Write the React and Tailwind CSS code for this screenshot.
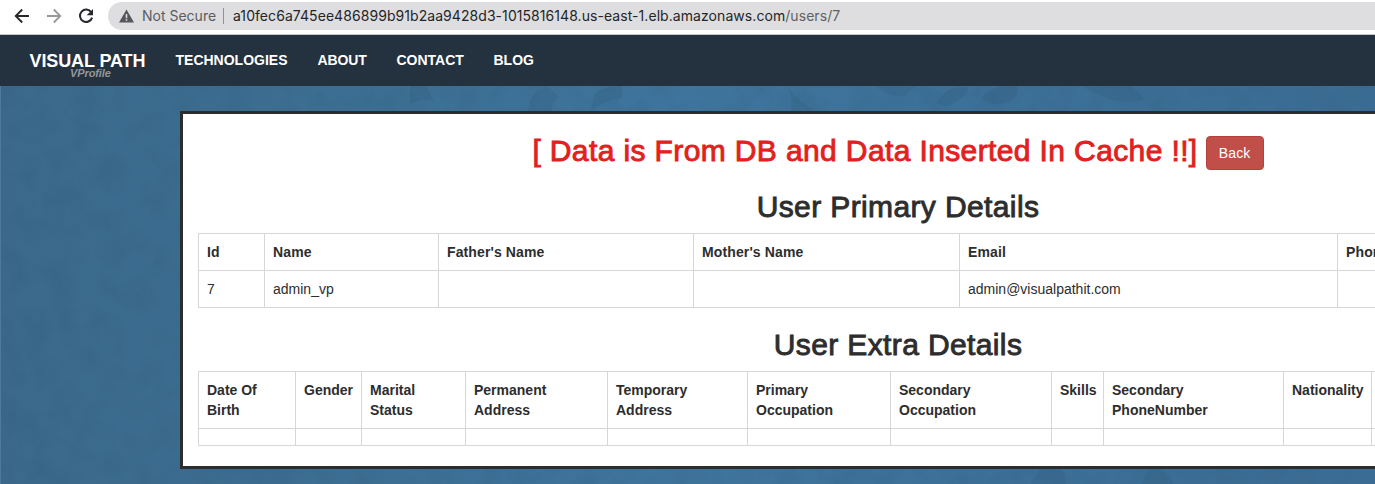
import React from "react";

const primary = [
  ["Id", "7"],
  ["Name", "admin_vp"],
  ["Father's Name", ""],
  ["Mother's Name", ""],
  ["Email", "admin@visualpathit.com"],
  ["Phone Number", ""],
];

const extra = [
  ["Date Of", "Birth"],
  ["Gender"],
  ["Marital", "Status"],
  ["Permanent", "Address"],
  ["Temporary", "Address"],
  ["Primary", "Occupation"],
  ["Secondary", "Occupation"],
  ["Skills"],
  ["Secondary", "PhoneNumber"],
  ["Nationality"],
  ["Language"],
];

function BrowserBar() {
  return (
    <header className="flex h-[35px] shrink-0 items-start border-b border-[#c4c6c8] bg-white font-[Inter,sans-serif] text-sm">
      <div className="flex h-8 w-[108px] shrink-0 items-center">
        <svg className="ml-[14px] size-4" viewBox="0 0 16 16" fill="none" stroke="#26272a" strokeWidth="1.8">
          <path d="M15 8H2M8.2 1.5 1.7 8l6.5 6.5" />
        </svg>
        <svg className="ml-4 size-4" viewBox="0 0 16 16" fill="none" stroke="#97989a" strokeWidth="1.8">
          <path d="M1 8h13M7.8 1.5 14.3 8l-6.5 6.5" />
        </svg>
        <svg className="ml-4 size-4" viewBox="0 0 16 16" fill="none">
          <path d="M13.3 4.3A6.2 6.2 0 1 0 14.1 9.6" stroke="#26272a" strokeWidth="2" />
          <path d="M15 1v6.3H8.7z" fill="#26272a" />
        </svg>
      </div>
      <div className="mt-[2px] flex h-7 grow items-center rounded-l-full bg-[#dedee0] pl-[11px] whitespace-nowrap">
        <svg className="h-[14px] w-[15px]" viewBox="0 0 15 14">
          <path d="M7.5 .5 15 13.5H0z" fill="#55565a" />
          <path d="M7.5 5v4.2M7.5 10.2v1.6" stroke="#dedee0" strokeWidth="1.6" />
        </svg>
        <span className="ml-2 w-[73px] text-[#5a5b5f]">Not Secure</span>
        <span className="ml-2 h-4 w-px bg-[#919296]" />
        <span className="ml-[9px] tracking-[0.062px] text-[#242528]">
          a10fec6a745ee486899b91b2aa9428d3-1015816148.us-east-1.elb.amazonaws.com
          <span className="text-[#606165]">/users/7</span>
        </span>
      </div>
    </header>
  );
}

function NavBar() {
  return (
    <nav className="flex h-[51px] shrink-0 bg-[#24313f] pl-[29px] font-bold whitespace-nowrap text-white">
      <div className="w-[146.5px] pt-[18px]">
        <div className="h-[15px] pl-[0.5px] text-[18px] leading-[17px] tracking-[-0.1px]">VISUAL PATH</div>
        <div className="pl-[41px] text-[11px] leading-[11px] tracking-[-0.1px] text-[#95979a] italic">VProfile</div>
      </div>
      <div className="flex pt-[15px] text-sm leading-5">
        <a className="w-[142px]">TECHNOLOGIES</a>
        <a className="w-[79px] tracking-[-0.1px]">ABOUT</a>
        <a className="w-[97px]">CONTACT</a>
        <a>BLOG</a>
      </div>
    </nav>
  );
}

function Heading({ children }) {
  return (
    <h2 className="text-center text-[30px] leading-[33px] tracking-[0.38px] [-webkit-text-stroke:0.9px_currentColor]">
      {children}
    </h2>
  );
}

export default function App() {
  return (
    <div className="flex h-[484px] w-[1375px] flex-col overflow-hidden font-['Liberation_Sans',sans-serif] text-[#2d2d2d]">
      <BrowserBar />
      <NavBar />
      <div className="relative grow overflow-hidden bg-linear-to-r from-[#3a698b] via-[#3f749c] to-[#3b6c93]">
        <svg className="absolute inset-0 size-full">
          <defs>
            <filter id="grain" x="0" y="0" width="100%" height="100%" colorInterpolationFilters="sRGB">
              <feTurbulence type="fractalNoise" baseFrequency="0.04" numOctaves="5" seed="4" />
              <feColorMatrix values="0 0 0 0 .14  0 0 0 0 .27  0 0 0 0 .38  .22 0 0 0 -.08" />
            </filter>
          </defs>
          <rect width="100%" height="100%" filter="url(#grain)" />
          <g fill="#2f5877" opacity="0.22">
            <path d="M410 0h16l8 15q-12-3-24 3zM530 15q8-15 17-15l12 11q-8 4-7 14h-24zM594 9q8-9 27-9 4 10-2 13-13 0-28 12z" />
            <path d="M786 0q8 8 5 25h24q-14-8-29-25zM876 0q12 12 29 9l12-9zM936 17q14-20 32-15-4 13-22 18zM982 11q10-13 35-11 5 13-17 18-16-1-18-7zM1082 0q35 22 63 13l-14-13z" />
            <path d="M1040 383q14-8 25 5v10h-34zM1150 382q15-2 24 16h-33z" />
          </g>
          <rect width="1" height="100%" fill="#4f7a9a" />
        </svg>
        <main className="relative mt-[25px] ml-[180px] h-[358px] w-[1436px] border-[3px] border-[#2d2d2d] bg-white px-[15px] text-sm leading-5">
          <div className="flex h-[76px] items-start justify-center pt-[20px] text-[#e2201d]">
            <Heading>[ Data is From DB and Data Inserted In Cache !!]</Heading>
            <button className="mt-[2px] ml-2 h-[34px] w-[58px] rounded border border-[#b8403c] bg-[#c04f4a] text-sm tracking-[0.2px] text-white">
              Back
            </button>
          </div>
          <Heading>User Primary Details</Heading>
          <table className="mt-[10px] w-[1400px] table-fixed border-collapse text-left">
            <colgroup>
              <col className="w-[66px]" />
              <col className="w-[174px]" />
              <col className="w-[255px]" />
              <col className="w-[266px]" />
              <col className="w-[378px]" />
              <col />
            </colgroup>
            <tbody>
              <tr className="h-[37px]">
                {primary.map(([h]) => (
                  <th key={h} className="border border-[#d6d7d7] p-2 tracking-[0.12px]">{h}</th>
                ))}
              </tr>
              <tr className="h-[37px]">
                {primary.map(([h, v]) => (
                  <td key={h} className="border border-[#d6d7d7] p-2">{v}</td>
                ))}
              </tr>
            </tbody>
          </table>
          <div className="mt-[20px]">
            <Heading>User Extra Details</Heading>
          </div>
          <table className="mt-[10px] w-[1400px] table-fixed border-collapse text-left">
            <colgroup>
              <col className="w-[97px]" />
              <col className="w-[66px]" />
              <col className="w-[104px]" />
              <col className="w-[142px]" />
              <col className="w-[140px]" />
              <col className="w-[143px]" />
              <col className="w-[161px]" />
              <col className="w-[52px]" />
              <col className="w-[180px]" />
              <col className="w-[88px]" />
              <col />
            </colgroup>
            <tbody>
              <tr className="h-[57px]">
                {extra.map((lines, i) => (
                  <th key={i} className="border border-[#d6d7d7] p-2 align-top whitespace-nowrap">
                    {lines.map((l) => (
                      <div key={l}>{l}</div>
                    ))}
                  </th>
                ))}
              </tr>
              <tr className="h-[17px]">
                {extra.map((_, i) => (
                  <td key={i} className="border border-[#d6d7d7]" />
                ))}
              </tr>
            </tbody>
          </table>
        </main>
      </div>
    </div>
  );
}
